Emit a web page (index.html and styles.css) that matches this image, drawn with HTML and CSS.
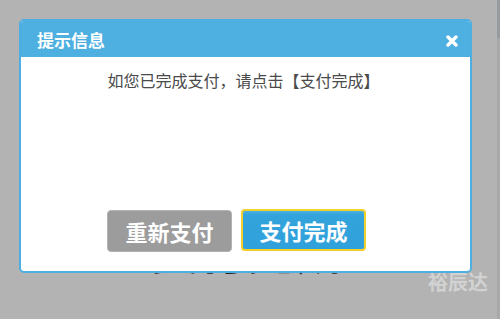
FILE: index.html
```html
<!DOCTYPE html>
<html lang="zh-CN">
<head>
<meta charset="utf-8">
<title>提示信息</title>
<link rel="stylesheet" href="styles.css">
</head>
<body>
  <div class="page">
    <h1 class="page-title">支付完成</h1>
  </div>
  <div class="scrollbar"><div class="thumb"></div></div>
  <div class="mask"></div>
  <div class="watermark">裕辰达</div>
  <div class="dialog">
    <div class="dialog-head">
      <span class="dialog-title">提示信息</span>
      <svg class="close" width="12" height="12" viewBox="0 0 12 12" aria-label="关闭">
        <path d="M2 2 L10 10 M10 2 L2 10" stroke="#fff" stroke-width="3.4" stroke-linecap="round"/>
      </svg>
    </div>
    <div class="dialog-body">
      <p class="message">如您已完成支付，请点击【支付完成】</p>
    </div>
    <div class="dialog-actions">
      <button class="btn btn-gray">重新支付</button>
      <button class="btn btn-blue">支付完成</button>
    </div>
  </div>
</body>
</html>
```

FILE: styles.css
```css
html, body {
  margin: 0;
  padding: 0;
  height: 100%;
}
body {
  display: flex;
  background: #ffffff;
  font-family: "Noto Sans CJK SC", "Noto Sans", sans-serif;
  overflow: hidden;
}
.page {
  flex: 1;
  text-align: center;
  padding-top: 224px;
}
.page-title {
  margin: 0;
  font-size: 48px;
  line-height: 48px;
  font-weight: 700;
  color: #333;
  padding-right: 3px;
}
.scrollbar {
  width: 3px;
  background: #f1f1f1;
  position: relative;
  z-index: 1;
}
.thumb {
  height: 38px;
  background: #d6dde4;
}
.mask {
  position: absolute;
  inset: 0;
  background: rgba(0, 0, 0, 0.298);
  z-index: 2;
}
.watermark {
  position: absolute;
  left: 428px;
  top: 267px;
  z-index: 3;
  font-size: 20px;
  font-weight: 700;
  color: #d2d2d2;
}
.dialog {
  position: absolute;
  left: 19px;
  top: 19px;
  width: 453px;
  height: 254px;
  box-sizing: border-box;
  border: 2px solid #4eaee2;
  border-radius: 5px;
  background: #fff;
  z-index: 4;
  display: flex;
  flex-direction: column;
  overflow: hidden;
}
.dialog-head {
  height: 36px;
  background: #4eafe1;
  display: flex;
  align-items: center;
  justify-content: space-between;
  padding: 0 12px 0 16px;
  flex: none;
}
.dialog-title {
  color: #fff;
  font-size: 17px;
  font-weight: 700;
  line-height: 20px;
  margin-top: 1px;
}
.close {
  display: block;
  margin-top: 3px;
}
.dialog-body {
  flex: 1;
}
.message {
  margin: 14px 0 0;
  text-align: center;
  font-size: 16px;
  line-height: 18px;
  color: #4a4a4a;
  padding-right: 4px;
}
.dialog-actions {
  display: flex;
  gap: 9px;
  padding: 0 0 19px 86px;
}
.btn {
  height: 42px;
  width: 125px;
  box-sizing: border-box;
  border-radius: 4px;
  font-family: "Noto Sans CJK SC", sans-serif;
  font-size: 22px;
  font-weight: 700;
  color: #fff;
  padding: 0;
  line-height: 1;
}
.btn-gray {
  background: #9c9c9c;
  border: 1px solid #b2b2b2;
}
.btn-blue {
  background: linear-gradient(#4ab0e3 0, #33a3dc 4px, #31a1db 100%);
  border: 2px solid #f4d02d;
  margin-top: -1px;
}
```
